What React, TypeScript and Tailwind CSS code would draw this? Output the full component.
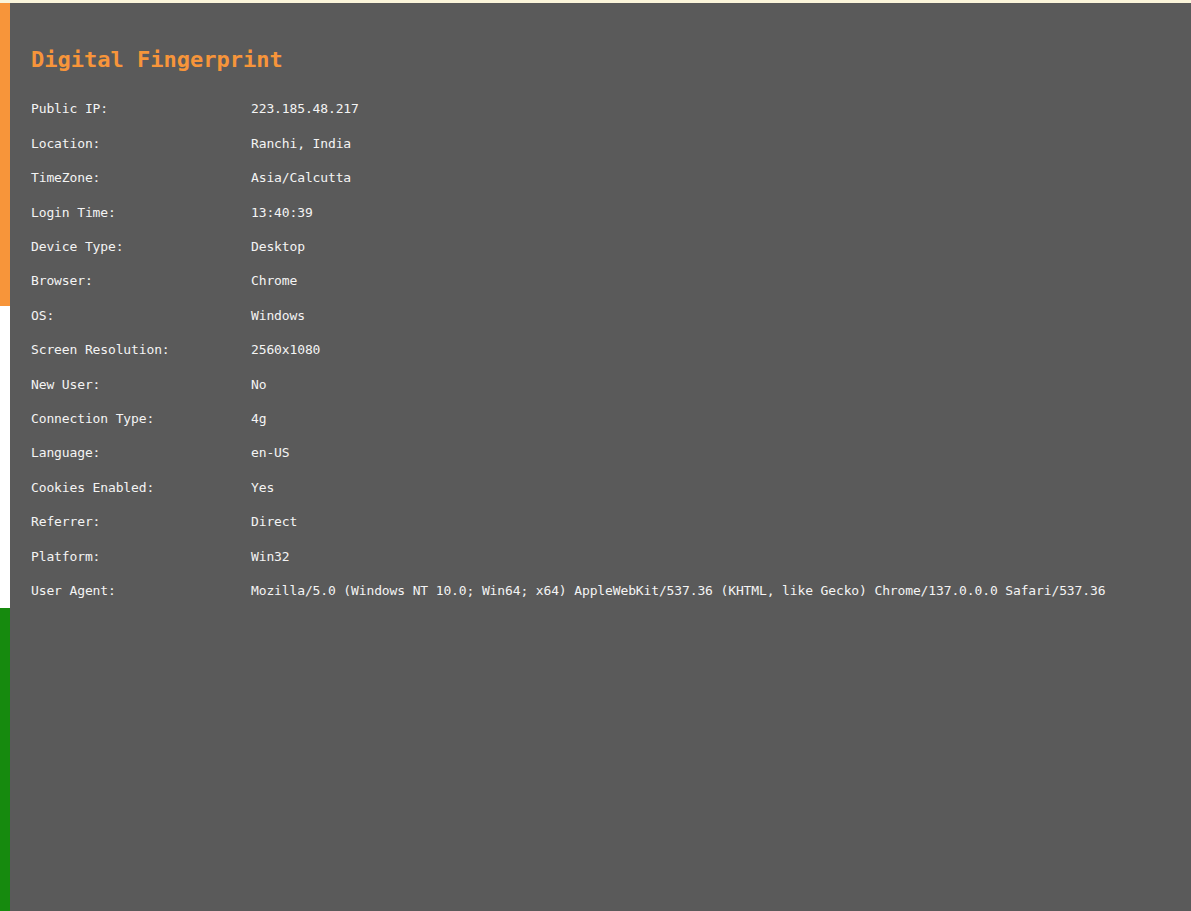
import React from "react";

const rows: [string, string][] = [
  ["Public IP:", "223.185.48.217"],
  ["Location:", "Ranchi, India"],
  ["TimeZone:", "Asia/Calcutta"],
  ["Login Time:", "13:40:39"],
  ["Device Type:", "Desktop"],
  ["Browser:", "Chrome"],
  ["OS:", "Windows"],
  ["Screen Resolution:", "2560x1080"],
  ["New User:", "No"],
  ["Connection Type:", "4g"],
  ["Language:", "en-US"],
  ["Cookies Enabled:", "Yes"],
  ["Referrer:", "Direct"],
  ["Platform:", "Win32"],
  [
    "User Agent:",
    "Mozilla/5.0 (Windows NT 10.0; Win64; x64) AppleWebKit/537.36 (KHTML, like Gecko) Chrome/137.0.0.0 Safari/537.36",
  ],
];

export default function App() {
  return (
    <div className="w-[1191px] h-[911px] flex flex-col bg-[#5a5a5a] overflow-hidden [font-family:'DejaVu_Sans_Mono',monospace]">
      <div className="h-[3px] bg-[#fbf5da] shrink-0" />
      <div className="flex flex-1">
        <div className="w-[10px] flex flex-col shrink-0">
          <div className="flex-1 bg-[#f7953a]" />
          <div className="flex-1 bg-white" />
          <div className="flex-1 bg-[#168a0e]" />
        </div>
        <div className="flex-1 pl-[21px] pt-[42px]">
          <h1 className="text-[22px] leading-[30px] font-bold text-[#f7953a] mb-[17px]">
            Digital Fingerprint
          </h1>
          <div className="flex flex-col">
            {rows.map(([k, v]) => (
              <div
                key={k}
                className="flex items-center h-[34.4px] text-[13px] tracking-[-0.13px] text-[#f4f4f4]"
              >
                <div className="w-[220px] shrink-0">{k}</div>
                <div className="whitespace-nowrap">{v}</div>
              </div>
            ))}
          </div>
        </div>
      </div>
    </div>
  );
}
